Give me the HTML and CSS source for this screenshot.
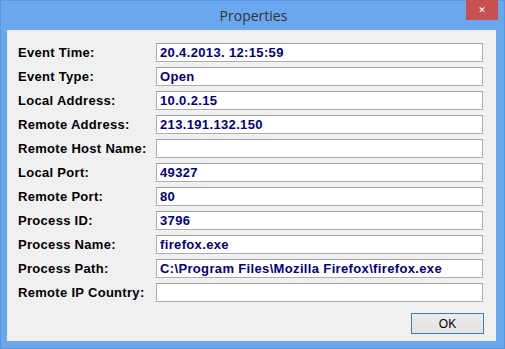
FILE: index.html
```html
<!DOCTYPE html>
<html>
<head>
<meta charset="utf-8">
<link rel="stylesheet" href="styles.css">
</head>
<body>
<div class="window">
  <div class="titlebar">
    <span></span>
    <span class="title">Properties</span>
    <span class="close-wrap"><span class="close">&#x2715;</span></span>
  </div>
  <div class="client">
    <div class="rows">
      <div class="label">Event Time:</div><div class="field">20.4.2013. 12:15:59</div>
      <div class="label">Event Type:</div><div class="field">Open</div>
      <div class="label">Local Address:</div><div class="field">10.0.2.15</div>
      <div class="label">Remote Address:</div><div class="field">213.191.132.150</div>
      <div class="label">Remote Host Name:</div><div class="field"></div>
      <div class="label">Local Port:</div><div class="field">49327</div>
      <div class="label">Remote Port:</div><div class="field">80</div>
      <div class="label">Process ID:</div><div class="field">3796</div>
      <div class="label">Process Name:</div><div class="field">firefox.exe</div>
      <div class="label">Process Path:</div><div class="field">C:\Program Files\Mozilla Firefox\firefox.exe</div>
      <div class="label">Remote IP Country:</div><div class="field"></div>
    </div>
    <div class="footer"><div class="ok">OK</div></div>
  </div>
</div>
</body>
</html>
```
FILE: styles.css
```css
html, body {
  margin: 0;
  padding: 0;
}
body {
  width: 505px;
  height: 349px;
  overflow: hidden;
}
.window {
  box-sizing: border-box;
  width: 505px;
  height: 349px;
  background: #6ba7ee;
  border: 1px solid #5b97de;
  display: flex;
  flex-direction: column;
  padding: 0 8px 7px 6px;
}
.titlebar {
  height: 29px;
  display: grid;
  grid-template-columns: 1fr auto 1fr;
  align-items: start;
}
.title {
  font-family: "Open Sans", sans-serif;
  font-size: 14px;
  color: #333333;
  line-height: 30px;
  padding-left: 4px;
}
.close-wrap {
  display: flex;
  justify-content: flex-end;
  margin-top: -1px;
  margin-right: -2px;
}
.close {
  width: 32px;
  height: 20px;
  background: #c75050;
  color: #ffffff;
  font-family: "DejaVu Sans", sans-serif;
  font-size: 9px;
  font-weight: bold;
  display: flex;
  align-items: center;
  justify-content: center;
}
.client {
  flex: 1;
  background: #f0f0f0;
  padding: 13px 12px 0 11px;
  display: flex;
  flex-direction: column;
}
.rows {
  display: grid;
  grid-template-columns: 138px 327px;
  grid-auto-rows: 19px;
  row-gap: 5px;
  align-items: center;
}
.label {
  font-family: "Liberation Sans", sans-serif;
  font-weight: bold;
  font-size: 13px;
  letter-spacing: 0.3px;
  color: #000000;
}
.field {
  box-sizing: border-box;
  height: 19px;
  background: #ffffff;
  border: 1px solid #abadb3;
  border-top-color: #a0a0a0;
  font-family: "Liberation Sans", sans-serif;
  font-weight: bold;
  font-size: 13px;
  letter-spacing: 0.35px;
  color: #000080;
  line-height: 17px;
  padding-left: 3px;
  white-space: nowrap;
}
.footer {
  display: flex;
  justify-content: flex-end;
  margin-top: 11px;
}
.ok {
  box-sizing: border-box;
  width: 73px;
  height: 21px;
  border: 1px solid #3c7fb1;
  background: linear-gradient(#ececec, #e2e2e2);
  font-family: "Liberation Sans", sans-serif;
  font-size: 12px;
  color: #000000;
  display: flex;
  align-items: center;
  justify-content: center;
}
```
